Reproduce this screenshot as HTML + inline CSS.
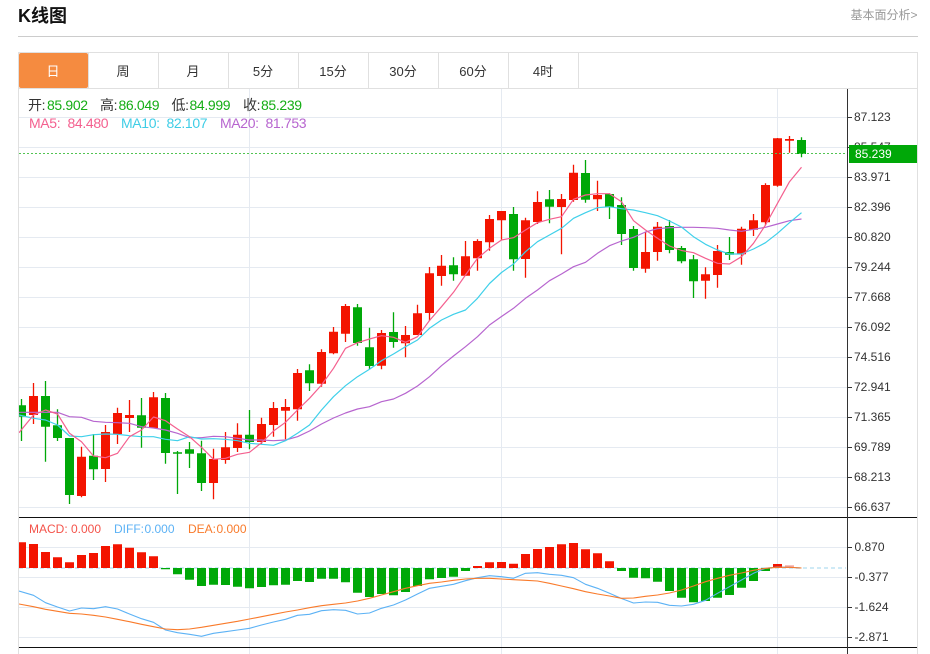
<!DOCTYPE html>
<html lang="zh"><head><meta charset="utf-8"><title>K线图</title>
<style>
html,body{margin:0;padding:0;background:#fff;width:930px;height:654px;overflow:hidden}
svg{display:block;font-family:"Liberation Sans","Noto Sans CJK SC",sans-serif}
.l{font-size:14px;letter-spacing:-.35px}
.a{font-size:12px;fill:#333}
.t{font-size:13px;fill:#333;text-anchor:middle}
</style></head><body>
<svg width="930" height="654" viewBox="0 0 930 654" xmlns="http://www.w3.org/2000/svg">
<defs><clipPath id="c"><rect x="19" y="89" width="828" height="565"/></clipPath></defs>
<text x="18" y="22" font-size="18" font-weight="700" fill="#111">K线图</text>
<text x="850.5" y="19" font-size="12" fill="#999">基本面分析&gt;</text>
<path d="M18 36.5H918" stroke="#ccc" fill="none"/>
<path d="M18.5 654V52.5H917.5V654" stroke="#e0e0e0" fill="none"/>
<path d="M18 88.5H918M88.5 53V88M158.5 53V88M228.5 53V88M298.5 53V88M368.5 53V88M438.5 53V88M508.5 53V88M578.5 53V88" stroke="#e0e0e0" fill="none"/>
<rect x="19" y="53" width="69" height="35" rx="2" fill="#f58b40"/>
<text class="t" x="53" y="76" style="fill:#fff">日</text>
<text class="t" x="123" y="76">周</text>
<text class="t" x="193" y="76">月</text>
<text class="t" x="263" y="76">5分</text>
<text class="t" x="333" y="76">15分</text>
<text class="t" x="403" y="76">30分</text>
<text class="t" x="473" y="76">60分</text>
<text class="t" x="543" y="76">4时</text>
<path d="M19 117.5H847M19 147.5H847M19 177.5H847M19 207.5H847M19 237.5H847M19 267.5H847M19 297.5H847M19 327.5H847M19 357.5H847M19 387.5H847M19 417.5H847M19 447.5H847M19 477.5H847M19 507.5H847M19 547.5H847M19 577.5H847M19 607.5H847M19 637.5H847M249.5 89V654M501.5 89V654M777.5 89V654" stroke="#e5eaf1" fill="none"/>
<g clip-path="url(#c)">
<path stroke="#00a808" stroke-width="1.3" fill="none" d="M21.5 399V441M45.5 381V461.7M57.5 409.3V441M69.5 438V504M93.5 434V480M141.5 398V447.7M165.5 393V463.7M177.5 451V494M189.5 442V468M201.5 440.7V491M249.5 410V449.3M309.5 364.3V391M357.5 304V345.7M369.5 327.7V369.3M393.5 312.3V347.7M453.5 257.3V280.7M513.5 207V270.7M549.5 190V223.3M585.5 160V202.7M609.5 193.3V219M621.5 197.3V245M633.5 226V270.7M669.5 220V253.3M681.5 246V263.3M693.5 255V298M729.5 237V260M801.5 137.3V157.3"/>
<path fill="#00a808" d="M17 405.3h9V416.7h-9zM41 396h9V426.7h-9zM53 425.3h9V438h-9zM65 438h9V495h-9zM89 455.7h9V469.3h-9zM137 415.3h9V427.7h-9zM161 398h9V453h-9zM173 452.3h9V453.7h-9zM185 449.3h9V453.7h-9zM197 453.3h9V483h-9zM245 434.7h9V442h-9zM305 370.3h9V383.3h-9zM353 307.3h9V343h-9zM365 347.3h9V366h-9zM389 332h9V342h-9zM449 265.3h9V274.3h-9zM509 214h9V259.3h-9zM545 199.3h9V206.7h-9zM581 173h9V199.7h-9zM605 194h9V207h-9zM617 205h9V234h-9zM629 229h9V268h-9zM665 226h9V250h-9zM677 248h9V261.3h-9zM689 259.3h9V281.3h-9zM725 252h9V254.7h-9zM797 140h9V154h-9z"/>
<path stroke="#f31400" stroke-width="1.3" fill="none" d="M33.5 383V424M81.5 446.7V497.3M105.5 425V482M117.5 407.7V444M129.5 400V432M153.5 392V428M213.5 448.7V499.3M225.5 432V463.7M237.5 423.3V452M261.5 417.7V444M273.5 402V436.7M285.5 399V439.3M297.5 369V420.7M321.5 349.3V386.7M333.5 327V354.3M345.5 304V342M381.5 330V369.3M405.5 326V357.3M417.5 304.7V335M429.5 267V320.7M441.5 255V285.7M465.5 241V276M477.5 239.3V270.7M489.5 215V250.7M501.5 211V240M525.5 217.7V277.7M537.5 191.3V224M561.5 194V254.3M573.5 164.7V201.7M597.5 180.7V211M645.5 232V272.7M657.5 222V260.7M705.5 267.3V298.7M717.5 245V287.7M741.5 226.7V264.7M753.5 214V236M765.5 183.3V225M777.5 138V186.7M789.5 136V152.7"/>
<path fill="#f31400" d="M29 396h9V415h-9zM77 456.7h9V496h-9zM101 432h9V469h-9zM113 413h9V434h-9zM125 415h9V418h-9zM149 397.3h9V428h-9zM209 459h9V483h-9zM221 447.3h9V460h-9zM233 434.7h9V448h-9zM257 424h9V442h-9zM269 408h9V425h-9zM281 407h9V410.7h-9zM293 373h9V409.3h-9zM317 352h9V383.7h-9zM329 331.7h9V353.3h-9zM341 306h9V333.7h-9zM377 333h9V365.7h-9zM401 335h9V343.3h-9zM413 313.3h9V335h-9zM425 273.3h9V313h-9zM437 265.7h9V276h-9zM461 256.3h9V275.7h-9zM473 241h9V258.3h-9zM485 219h9V242.3h-9zM497 211h9V220.3h-9zM521 220.3h9V259h-9zM533 202h9V222h-9zM557 199h9V207h-9zM569 172.7h9V200h-9zM593 195h9V199.3h-9zM641 252h9V268.7h-9zM653 226.7h9V252h-9zM701 274.3h9V280.7h-9zM713 251h9V275h-9zM737 228.7h9V254.3h-9zM749 220.3h9V229.7h-9zM761 185h9V222.3h-9zM773 138.3h9V185.7h-9zM785 139h9V140.7h-9z"/>
<polyline fill="none" stroke="#b765cf" stroke-width="1.2" stroke-linejoin="round" points="19,412.3 33.5,412.3 45.5,412.3 57.5,412.3 69.5,416.7 81.5,417.3 93.5,421.3 105.5,422.3 117.5,422.7 129.5,423.3 141.5,426.7 153.5,428 165.5,430 177.5,433.3 189.5,437.7 201.5,437.7 213.5,436.3 225.5,436.7 237.5,438.3 249.5,440 261.5,440 273.5,440.7 285.5,440 297.5,436.7 309.5,431 321.5,424 333.5,418 345.5,413 357.5,409 369.5,406.7 381.5,401.7 393.5,399 405.5,393.3 417.5,386 429.5,376.7 441.5,365.7 453.5,356 465.5,346.7 477.5,336.7 489.5,325 501.5,316.5 513.5,308.3 525.5,298.3 537.5,290 549.5,280.7 561.5,274 573.5,266.7 585.5,262.3 597.5,253.3 609.5,245.7 621.5,241 633.5,237.3 645.5,232 657.5,228.7 669.5,227.7 681.5,227.3 693.5,227.3 705.5,227.7 717.5,228.3 729.5,230 741.5,231.3 753.5,229.3 765.5,227.3 777.5,224 789.5,220.7 801.5,219"/>
<polyline fill="none" stroke="#3fd0ea" stroke-width="1.2" stroke-linejoin="round" points="19,415 33.5,418.3 45.5,420 57.5,425 69.5,436 81.5,436.7 93.5,434.7 105.5,434 117.5,434.3 129.5,435.7 141.5,436.7 153.5,436.7 165.5,439.3 177.5,440.7 189.5,436.7 201.5,439 213.5,438.7 225.5,439.3 237.5,440.7 249.5,443.3 261.5,444.3 273.5,445.3 285.5,440.7 297.5,433.3 309.5,425 321.5,410 333.5,396.7 345.5,385.7 357.5,376.7 369.5,369.3 381.5,360.7 393.5,354 405.5,346.7 417.5,340 429.5,328.3 441.5,320 453.5,314.3 465.5,310 477.5,298.3 489.5,283.5 501.5,272.5 513.5,264 525.5,251.7 537.5,241.7 549.5,235 561.5,228.3 573.5,218.3 585.5,212.7 597.5,207.7 609.5,206.7 621.5,208.7 633.5,210 645.5,212.7 657.5,215.7 669.5,221 681.5,227 693.5,236.7 705.5,244.3 717.5,250 729.5,254 741.5,254 753.5,249 765.5,242.7 777.5,233.3 789.5,222.7 801.5,212.7"/>
<polyline fill="none" stroke="#f4608f" stroke-width="1.2" stroke-linejoin="round" points="19,432.7 33.5,415 45.5,410 57.5,414 69.5,433.3 81.5,441.7 93.5,456 105.5,457.7 117.5,453.3 129.5,436.7 141.5,430 153.5,417 165.5,420.7 177.5,429 189.5,436.7 201.5,447.3 213.5,459.3 225.5,458.3 237.5,454.3 249.5,452.3 261.5,442.7 273.5,431 285.5,422.3 297.5,410 309.5,398.3 321.5,385 333.5,368.3 345.5,348.3 357.5,342.7 369.5,339 381.5,335.7 393.5,337.3 405.5,342.3 417.5,336.7 429.5,320.5 441.5,306.7 453.5,292.3 465.5,275 477.5,258.3 489.5,248.3 501.5,240 513.5,237.7 525.5,230 537.5,222.7 549.5,219.3 561.5,216.7 573.5,199.3 585.5,195 597.5,193.7 609.5,193.7 621.5,201.7 633.5,220.7 645.5,230 657.5,238.3 669.5,246 681.5,250.5 693.5,252.7 705.5,258.3 717.5,263.3 729.5,264 741.5,256.7 753.5,243.3 765.5,225 777.5,203.3 789.5,181.7 801.5,167.3"/>
<path d="M19 568H846" stroke="#bfe3f3" stroke-width="1.4" stroke-dasharray="4 3" fill="none"/>
<path fill="#f31400" d="M17 542.3h9V568h-9zM29 544h9V568h-9zM41 552h9V568h-9zM53 557.3h9V568h-9zM65 562.3h9V568h-9zM77 555h9V568h-9zM89 553h9V568h-9zM101 546h9V568h-9zM113 544.3h9V568h-9zM125 547.7h9V568h-9zM137 552.3h9V568h-9zM149 556.3h9V568h-9zM473 566h9V568h-9zM485 562.3h9V568h-9zM497 562h9V568h-9zM509 563.7h9V568h-9zM521 554h9V568h-9zM533 549h9V568h-9zM545 547h9V568h-9zM557 544.3h9V568h-9zM569 543h9V568h-9zM581 549.3h9V568h-9zM593 553.3h9V568h-9zM605 561.3h9V568h-9zM773 564h9V568h-9z"/>
<path fill="#f8a8a0" d="M785 565.3h9V568h-9z"/>
<path fill="#00a808" d="M161 568h9V569.3h-9zM173 568h9V574.3h-9zM185 568h9V579.7h-9zM197 568h9V586h-9zM209 568h9V584.7h-9zM221 568h9V585h-9zM233 568h9V586.7h-9zM245 568h9V588.3h-9zM257 568h9V587h-9zM269 568h9V585.3h-9zM281 568h9V584.7h-9zM293 568h9V581h-9zM305 568h9V582h-9zM317 568h9V578.7h-9zM329 568h9V578.7h-9zM341 568h9V582.3h-9zM353 568h9V592.7h-9zM365 568h9V597h-9zM377 568h9V594h-9zM389 568h9V595.3h-9zM401 568h9V592h-9zM413 568h9V586h-9zM425 568h9V579.3h-9zM437 568h9V578h-9zM449 568h9V576.7h-9zM461 568h9V571h-9zM617 568h9V571h-9zM629 568h9V577.7h-9zM641 568h9V578.3h-9zM653 568h9V581.7h-9zM665 568h9V591h-9zM677 568h9V597.7h-9zM689 568h9V602.3h-9zM701 568h9V601h-9zM713 568h9V597.7h-9zM725 568h9V595h-9zM737 568h9V587.7h-9zM749 568h9V581h-9zM761 568h9V571h-9z"/>
<polyline fill="none" stroke="#5cb2f5" stroke-width="1.1" stroke-linejoin="round" points="19,591 33.5,595.3 45.5,602.7 57.5,607 69.5,611 81.5,608 93.5,608.7 105.5,606.7 117.5,609 129.5,614 141.5,618.7 153.5,622.3 165.5,630 177.5,632.7 189.5,634.3 201.5,636.3 213.5,633.3 225.5,631.7 237.5,630 249.5,628.3 261.5,625 273.5,622 285.5,619.3 297.5,615.3 309.5,614.3 321.5,610.7 333.5,609.7 345.5,610.3 357.5,614 369.5,613 381.5,608.3 393.5,605 405.5,600 417.5,594 429.5,588.3 441.5,586.3 453.5,584.3 465.5,580.7 477.5,577.7 489.5,575.7 501.5,576.7 513.5,578.3 525.5,573.3 537.5,572.7 549.5,574.3 561.5,575.3 573.5,577.7 585.5,584.3 597.5,588.3 609.5,593.3 621.5,598.5 633.5,603 645.5,602 657.5,602.3 669.5,605.3 681.5,606 693.5,604.3 705.5,600.3 717.5,593.3 729.5,586.7 741.5,580 753.5,573.3 765.5,568.3 777.5,567 789.5,567.3 801.5,568"/>
<polyline fill="none" stroke="#f97a2a" stroke-width="1.1" stroke-linejoin="round" points="19,604 33.5,606.7 45.5,609.3 57.5,611.3 69.5,613.3 81.5,614 93.5,615.3 105.5,617 117.5,619.3 129.5,621.7 141.5,624.3 153.5,626.7 165.5,629 177.5,629.7 189.5,629 201.5,627.3 213.5,625.3 225.5,623.3 237.5,621.3 249.5,619 261.5,616.7 273.5,614.3 285.5,612 297.5,610 309.5,607.7 321.5,605.7 333.5,604.3 345.5,603 357.5,601 369.5,598.3 381.5,595 393.5,591.7 405.5,588.3 417.5,585.7 429.5,583.3 441.5,582 453.5,580.3 465.5,579 477.5,578.3 489.5,578.3 501.5,579 513.5,579.7 525.5,580.3 537.5,581 549.5,583.3 561.5,586 573.5,588.7 585.5,591.7 597.5,594 609.5,596 621.5,598.3 633.5,598 645.5,596.3 657.5,595 669.5,593 681.5,590 693.5,586 705.5,581.7 717.5,578.3 729.5,575.3 741.5,573 753.5,570.3 765.5,568.3 777.5,567.3 789.5,567.3 801.5,568"/>
</g>
<path d="M19 153.5H847" stroke="#52c452" stroke-dasharray="2 2" fill="none"/>
<path d="M19 517.5H917M19 647.5H917" stroke="#111" fill="none"/>
<path d="M847.5 89V654" stroke="#333" fill="none"/>
<path d="M847 117.5h5M847 147.5h5M847 177.5h5M847 207.5h5M847 237.5h5M847 267.5h5M847 297.5h5M847 327.5h5M847 357.5h5M847 387.5h5M847 417.5h5M847 447.5h5M847 477.5h5M847 507.5h5M847 547.5h5M847 577.5h5M847 607.5h5M847 637.5h5" stroke="#333" fill="none"/>
<text class="a" x="854" y="121">87.123</text>
<text class="a" x="854" y="151">85.547</text>
<text class="a" x="854" y="181">83.971</text>
<text class="a" x="854" y="211">82.396</text>
<text class="a" x="854" y="241">80.820</text>
<text class="a" x="854" y="271">79.244</text>
<text class="a" x="854" y="301">77.668</text>
<text class="a" x="854" y="331">76.092</text>
<text class="a" x="854" y="361">74.516</text>
<text class="a" x="854" y="391">72.941</text>
<text class="a" x="854" y="421">71.365</text>
<text class="a" x="854" y="451">69.789</text>
<text class="a" x="854" y="481">68.213</text>
<text class="a" x="854" y="511">66.637</text>
<text class="a" x="854.5" y="551">0.870</text>
<text class="a" x="854.5" y="581">-0.377</text>
<text class="a" x="854.5" y="611">-1.624</text>
<text class="a" x="854.5" y="641">-2.871</text>
<rect x="849" y="145" width="68" height="18" fill="#00a808"/>
<text x="855" y="158" font-size="12" fill="#fff">85.239</text>
<text class="l" x="28" y="110" fill="#333">开:</text><text class="l" x="47" y="110" fill="#14ad14">85.902</text>
<text class="l" x="100" y="110" fill="#333">高:</text><text class="l" x="118.5" y="110" fill="#14ad14">86.049</text>
<text class="l" x="171.5" y="110" fill="#333">低:</text><text class="l" x="189.5" y="110" fill="#14ad14">84.999</text>
<text class="l" x="243" y="110" fill="#333">收:</text><text class="l" x="261" y="110" fill="#14ad14">85.239</text>
<text class="l" x="29" y="128" fill="#f4608f">MA5:</text><text class="l" x="67.5" y="128" fill="#f4608f">84.480</text>
<text class="l" x="121" y="128" fill="#3fcde6">MA10:</text><text class="l" x="166.5" y="128" fill="#3fcde6">82.107</text>
<text class="l" x="220" y="128" fill="#b765cf">MA20:</text><text class="l" x="265.5" y="128" fill="#b765cf">81.753</text>
<text x="29" y="533" font-size="12" fill="#f4534a">MACD:</text><text x="71" y="533" font-size="12" fill="#f4534a">0.000</text>
<text x="114" y="533" font-size="12" fill="#5cb2f5">DIFF:</text><text x="144.5" y="533" font-size="12" fill="#5cb2f5">0.000</text>
<text x="188" y="533" font-size="12" fill="#f97a2a">DEA:</text><text x="216.5" y="533" font-size="12" fill="#f97a2a">0.000</text>
</svg>
</body></html>
